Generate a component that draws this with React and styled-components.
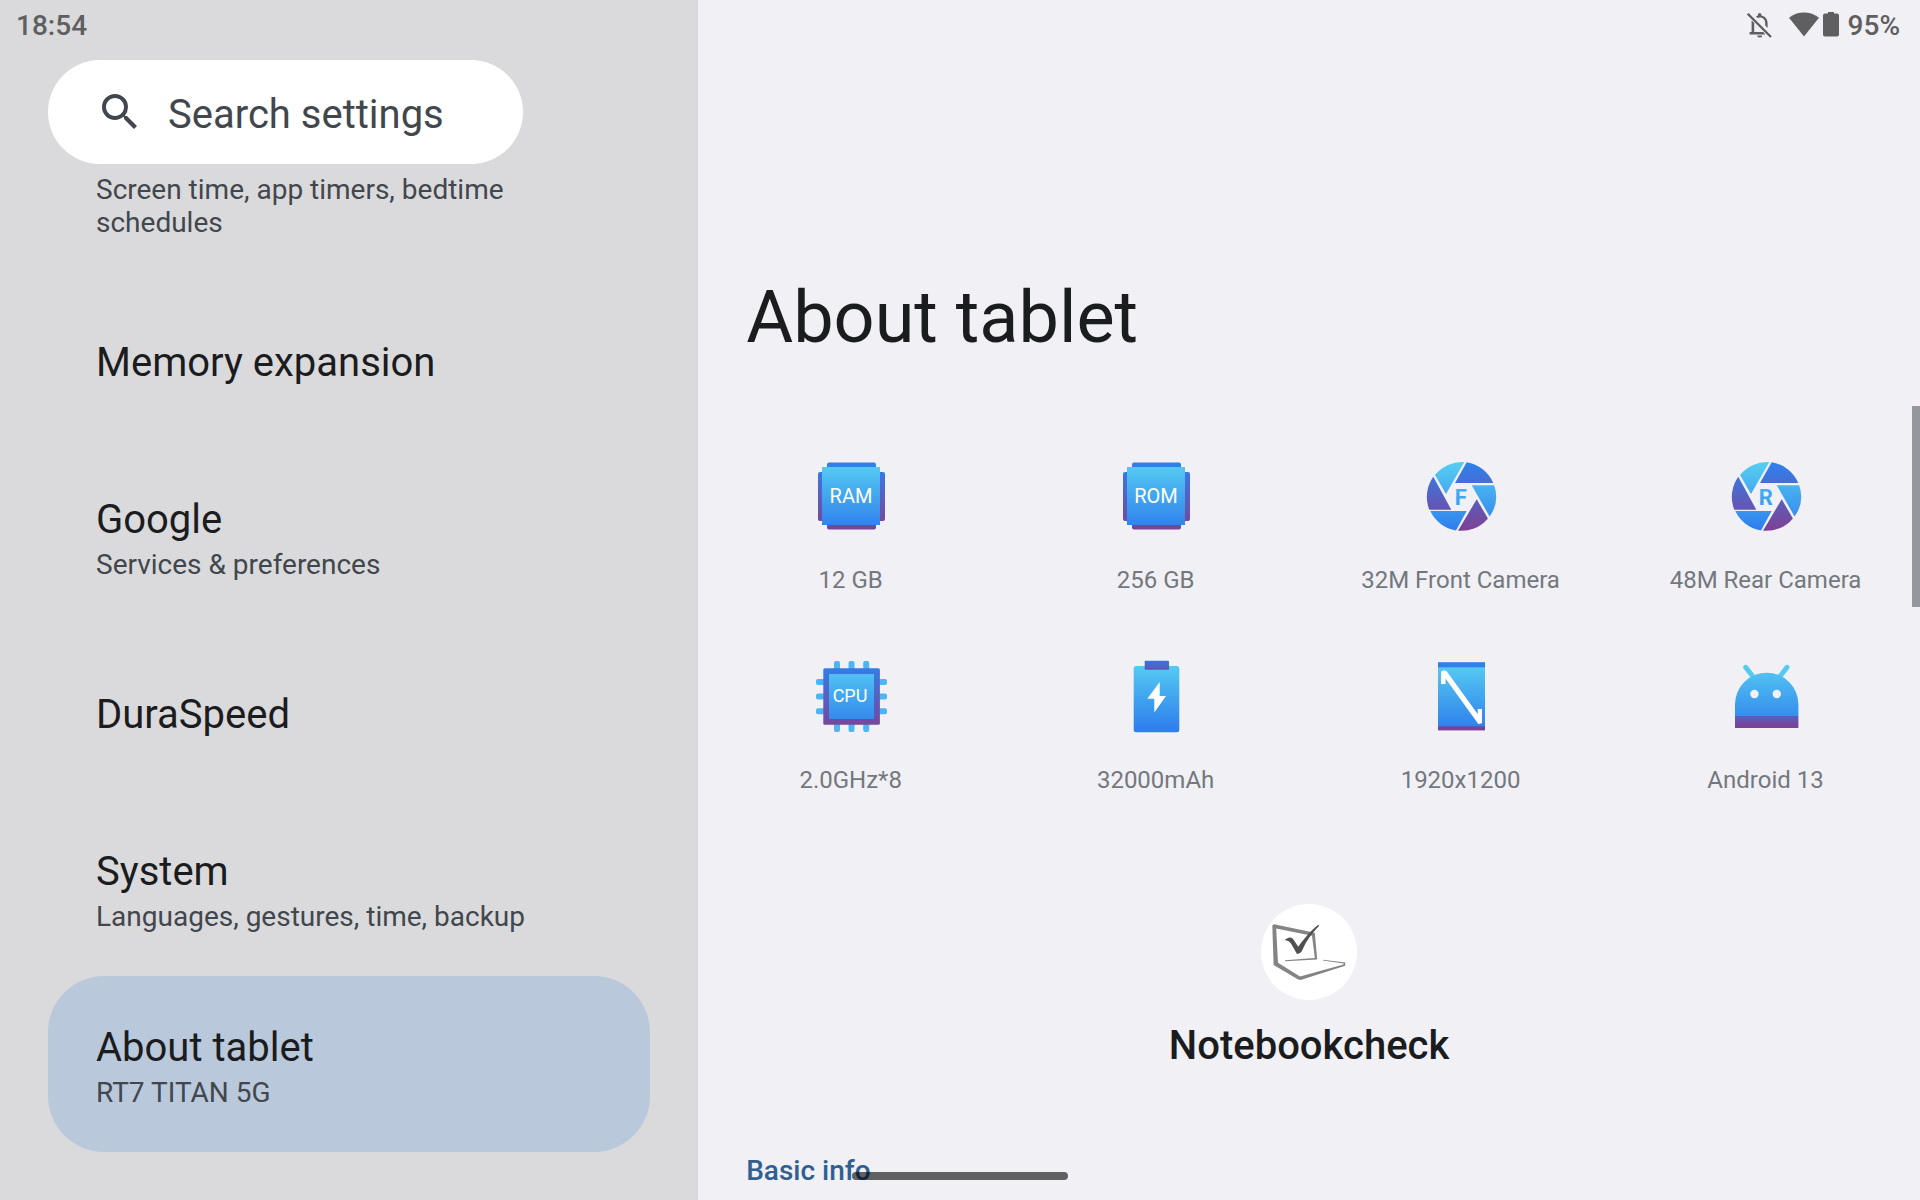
import React from "react";
import styled, { createGlobalStyle } from "styled-components";

const GlobalStyle = createGlobalStyle`
  *, *::before, *::after { box-sizing: border-box; }
  body {
    margin: 0;
    background: #f1f0f5;
    color: #1b1c1e;
    font-family: Roboto, "Noto Sans", sans-serif;
  }
`;

const Shell = styled.div`
  position: relative;
  display: grid;
  grid-template-columns: minmax(0, 4fr) minmax(0, 7fr);
  min-height: 100vh;
`;

const Sidebar = styled.aside`
  display: flex;
  flex-direction: column;
  background: #dadadc;
`;

const Panel = styled.main`
  display: flex;
  flex-direction: column;
`;

const StatusBar = styled.div`
  display: flex;
  align-items: center;
  justify-content: ${(p) => (p.$end ? "flex-end" : "flex-start")};
  height: 48px;
  padding: 4px 20px 0 16px;
  color: #5f5f61;
  font-size: 28px;
  font-weight: 500;
  line-height: 32px;
`;

const StatusIcon = styled.svg`
  display: block;
  width: ${(p) => p.$width}px;
  height: 28px;
  margin-right: ${(p) => p.$gap}px;
  fill: currentColor;
`;

const SearchPill = styled.label`
  display: flex;
  align-items: center;
  gap: 24px;
  width: 68%;
  height: 104px;
  margin: 12px 48px 0;
  padding: 0 48px;
  border-radius: 52px;
  background: #fff;
  color: #41474d;
`;

const SearchIcon = styled.svg`
  flex: none;
  width: 48px;
  height: 48px;
  fill: currentColor;
`;

const SearchInput = styled.input`
  flex: 1;
  min-width: 0;
  padding: 6px 0 0;
  border: 0;
  outline: 0;
  background: transparent;
  color: inherit;
  font: 400 40px/48px Roboto, "Noto Sans", sans-serif;
  &::placeholder { color: inherit; opacity: 1; }
`;

const NavList = styled.nav`
  display: flex;
  flex-direction: column;
  padding: 0 48px 48px;
`;

const NavItem = styled.a`
  display: flex;
  flex-direction: column;
  justify-content: ${(p) => (p.$scrolled ? "flex-start" : "center")};
  gap: 4px;
  min-height: ${(p) => (p.$scrolled ? 108 : 176)}px;
  padding: ${(p) => (p.$scrolled ? "9px 128px 0 48px" : "5px 48px 0")};
  border-radius: 56px;
  background: ${(p) => (p.$active ? "#b9c8db" : "transparent")};
  color: inherit;
  text-decoration: none;
`;

const NavTitle = styled.span`
  font-size: 40px;
  line-height: 48px;
`;

const NavSummary = styled.span`
  color: #41474d;
  font-size: 28px;
  line-height: 33px;
`;

const Title = styled.h1`
  margin: 0;
  padding: 226px 48px 0;
  font-size: 72px;
  font-weight: 400;
  line-height: 88px;
`;

const SpecGrid = styled.ul`
  display: grid;
  grid-template-columns: repeat(4, 1fr);
  row-gap: 64px;
  margin: 98px 0 0;
  padding: 0 2px 0 0;
  list-style: none;
`;

const Spec = styled.li`
  display: flex;
  flex-direction: column;
  align-items: center;
  gap: 32px;
  color: #73787e;
  font-size: 24px;
  line-height: 32px;
`;

const SpecIcon = styled.svg`
  display: block;
  width: 72px;
  height: 72px;
  overflow: visible;
  font-family: Roboto, sans-serif;
  text-anchor: middle;
`;

const Device = styled.section`
  display: flex;
  flex-direction: column;
  align-items: center;
  gap: 22px;
  margin-top: 108px;
`;

const DeviceLogo = styled.svg`
  display: block;
  width: 96px;
  height: 96px;
  border-radius: 50%;
  background: #fff;
`;

const DeviceName = styled.h2`
  margin: 0;
  font-size: 40px;
  font-weight: 500;
  line-height: 48px;
`;

const SectionLabel = styled.h3`
  margin: 84px 48px 0;
  padding-bottom: 12px;
  color: #2f6090;
  font-size: 28px;
  font-weight: 500;
  line-height: 33px;
`;

const ScrollThumb = styled.div`
  position: absolute;
  top: 406px;
  right: 0;
  width: 8px;
  height: 201px;
  background: #94979b;
`;

const GestureBar = styled.div`
  position: absolute;
  bottom: 20px;
  left: 50%;
  width: 216px;
  height: 8px;
  border-radius: 4px;
  background: rgba(0, 0, 0, 0.6);
  transform: translateX(-50%);
`;

const LIGHT = "url(#light)";
const DEEP = "url(#deep)";

const GradientDefs = styled.svg`
  position: absolute;
  width: 0;
  height: 0;
`;

function Gradients() {
  return (
    <GradientDefs aria-hidden="true">
      <defs>
        <linearGradient id="light" gradientUnits="userSpaceOnUse" x1="0" y1="4" x2="0" y2="68">
          <stop offset="0" stopColor="#56ccf2" />
          <stop offset="1" stopColor="#2f80ed" />
        </linearGradient>
        <linearGradient id="deep" gradientUnits="userSpaceOnUse" x1="0" y1="4" x2="0" y2="68">
          <stop offset="0" stopColor="#2f80ed" />
          <stop offset="1" stopColor="#7b4397" />
        </linearGradient>
        <linearGradient id="cap" x1="0" y1="0" x2="0" y2="1">
          <stop offset="0" stopColor="#3a72dc" />
          <stop offset="1" stopColor="#5f58b8" />
        </linearGradient>
        <linearGradient id="base" x1="0" y1="0" x2="0" y2="1">
          <stop offset="0" stopColor="#5660c0" />
          <stop offset="0.8" stopColor="#7b4397" />
        </linearGradient>
      </defs>
    </GradientDefs>
  );
}

function MemoryChip({ text }) {
  return (
    <SpecIcon viewBox="0 0 72 72">
      <rect x="12" y="2.5" width="49" height="67" rx="2" fill={DEEP} />
      <rect x="3" y="12" width="67" height="49" rx="2" fill={DEEP} />
      <rect x="7" y="7" width="58" height="58" fill={LIGHT} />
      <text x="36" y="43.3" fill="#fff" fontSize="20">{text}</text>
    </SpecIcon>
  );
}

function Shutter({ letter }) {
  return (
    <SpecIcon viewBox="0 0 72 72">
      <g fill={LIGHT}>
        <path d="M21 34 10 15A34.5 34.5 0 0 1 39.3 2.1Z" />
        <path d="M46.7 25.3H69.2A34.5 34.5 0 0 1 64.6 56.5Z" />
        <path d="M5.3 51H41.7L31 70.4A34.5 34.5 0 0 1 5.3 51Z" />
        <text x="35.7" y="44.6" fontSize="22" fontWeight="700">{letter}</text>
      </g>
      <g fill={DEEP}>
        <path d="M41.7 2.3 30 23H68.3A34.5 34.5 0 0 0 41.7 2.3Z" />
        <path d="M51.7 39.3 62.9 58.4A34.5 34.5 0 0 1 33 70.7Z" />
        <path d="M8.3 16.7 26.3 49.7H4.3A34.5 34.5 0 0 1 8.3 16.7Z" />
      </g>
    </SpecIcon>
  );
}

function Processor() {
  const pins = [19, 33.5, 48.2];
  return (
    <SpecIcon viewBox="0 0 72 72">
      <g fill="#4bb6f2">
        {pins.map((p) => (
          <React.Fragment key={p}>
            <rect x={p} y="1" width="6" height="71" rx="2" />
            <rect x="1" y={p} width="71" height="6" rx="2" />
          </React.Fragment>
        ))}
      </g>
      <rect x="8.3" y="8.3" width="56.6" height="56.4" rx="1.5" fill={DEEP} />
      <rect x="14" y="14" width="45" height="45" fill={LIGHT} />
      <text x="35" y="42.3" fill="#fff" fontSize="18">CPU</text>
    </SpecIcon>
  );
}

function BatteryPack() {
  return (
    <SpecIcon viewBox="0 0 72 72">
      <rect x="13.7" y="6" width="45.6" height="66.2" rx="2.5" fill={LIGHT} />
      <rect x="24.7" y="0.7" width="24.3" height="9" rx="0.8" fill="url(#cap)" />
      <path d="M39.7 22V35.9H46L34.3 52.4V38.8H27.3Z" fill="#fff" />
    </SpecIcon>
  );
}

function Screen() {
  return (
    <SpecIcon viewBox="0 0 72 72">
      <rect x="13" y="2.2" width="47" height="68.2" fill={DEEP} />
      <rect x="13" y="7.3" width="47" height="59" fill={LIGHT} />
      <path d="M16 24V11.7L18.7 10.3 21.5 11 52.7 54V49H57V63.3L53.3 64 20.5 18.5V24Z" fill="#fff" />
    </SpecIcon>
  );
}

function Robot() {
  return (
    <SpecIcon viewBox="0 0 72 72">
      <path d="M15.7 7.3 24 18M57 7.3 48.8 18" stroke="#56caf2" strokeWidth="5" strokeLinecap="round" />
      <path d="M5 56V44.4A31.7 31.7 0 0 1 68.4 44.4V56Z" fill={LIGHT} />
      <rect x="5" y="56" width="63.4" height="12" fill="url(#base)" />
      <circle cx="24.4" cy="34" r="4.2" fill="#f1f0f5" />
      <circle cx="46.8" cy="34" r="4.2" fill="#f1f0f5" />
    </SpecIcon>
  );
}

function LaptopLogo() {
  return (
    <DeviceLogo viewBox="0 0 96 96" role="img" aria-label="Notebookcheck">
      <path d="M11.3 21.5 13 20.3 53.8 28.7 56.2 55.6 24 57.2V56.3L53.8 54 51 31.8 15.2 24.4 17 58.7 39 72.6 82.6 60.6V59.6L62 56.5 62.2 55.7 84.2 58.6V61.7L39.6 76 37.2 75.4 12.6 61Z" fill="#848484" />
      <path d="M23.6 36.2C27 32.8 31 32.7 32.4 35.6L37.3 42.8C43 34.5 51.5 25 57.4 20.8L58.2 21.8C51.5 28.5 45.5 36.5 41.6 45.4Q40.4 49 36 50L29.8 39.2Q27.5 35.8 23.6 36.2Z" fill="#505050" />
    </DeviceLogo>
  );
}

const navItems = [
  { summary: "Screen time, app timers, bedtime schedules", scrolled: true },
  { title: "Memory expansion" },
  { title: "Google", summary: "Services & preferences" },
  { title: "DuraSpeed" },
  { title: "System", summary: "Languages, gestures, time, backup" },
  { title: "About tablet", summary: "RT7 TITAN 5G", active: true },
];

const specs = [
  { icon: <MemoryChip text="RAM" />, label: "12 GB" },
  { icon: <MemoryChip text="ROM" />, label: "256 GB" },
  { icon: <Shutter letter="F" />, label: "32M Front Camera" },
  { icon: <Shutter letter="R" />, label: "48M Rear Camera" },
  { icon: <Processor />, label: "2.0GHz*8" },
  { icon: <BatteryPack />, label: "32000mAh" },
  { icon: <Screen />, label: "1920x1200" },
  { icon: <Robot />, label: "Android 13" },
];

export default function App() {
  return (
    <Shell>
      <GlobalStyle />
      <Gradients />
      <Sidebar>
        <StatusBar>18:54</StatusBar>
        <SearchPill>
          <SearchIcon viewBox="0 0 24 24" aria-hidden="true">
            <path d="M15.5 14h-.79l-.28-.27A6.47 6.47 0 0 0 16 9.5 6.5 6.5 0 1 0 9.5 16c1.61 0 3.09-.59 4.23-1.57l.27.28v.79l5 4.99L20.49 19zm-6 0C7.01 14 5 11.99 5 9.5S7.01 5 9.5 5 14 7.01 14 9.5 11.99 14 9.5 14" />
          </SearchIcon>
          <SearchInput type="text" placeholder="Search settings" aria-label="Search settings" />
        </SearchPill>
        <NavList>
          {navItems.map((item) => (
            <NavItem
              key={item.title || item.summary}
              href="#"
              $active={item.active}
              $scrolled={item.scrolled}
            >
              {item.title && <NavTitle>{item.title}</NavTitle>}
              {item.summary && <NavSummary>{item.summary}</NavSummary>}
            </NavItem>
          ))}
        </NavList>
      </Sidebar>
      <Panel>
        <StatusBar $end>
          <StatusIcon viewBox="0 2 28 28" $width={28} $gap={15} aria-hidden="true">
            <path d="M3.6 3 26.8 26.2 25.2 27.8 1.8 4.6Z" />
            <path d="M6.6 10.4 9.2 13V22H18.2L20.4 24.4H4.6V22H6.6ZM11 6.4Q12.2 5.6 13 5.4V4.6A1.7 1.7 0 0 1 16.4 4.6V5.4C20.4 6.3 22.6 9.4 22.6 13V18L20.2 15.6V13C20.2 9.6 17.6 7.6 14.8 7.6Q13.6 7.6 12.6 8.1Z" />
            <path d="M12.2 25.4H17.2A2.5 2.2 0 0 1 12.2 25.4Z" />
          </StatusIcon>
          <StatusIcon viewBox="0 1 32 28" $width={32} $gap={3} aria-hidden="true">
            <path d="M16 25.4 1 6.8C9.5 -.2 22.5 -.2 31 6.8Z" />
          </StatusIcon>
          <StatusIcon viewBox="0 2 16 28" $width={16} $gap={9} aria-hidden="true">
            <path d="M5 2H11V3.6H14A2 2 0 0 1 16 5.6V24.6A2 2 0 0 1 14 26.6H2A2 2 0 0 1 0 24.6V5.6A2 2 0 0 1 2 3.6H5Z" />
          </StatusIcon>
          95%
        </StatusBar>
        <Title>About tablet</Title>
        <SpecGrid>
          {specs.map((spec) => (
            <Spec key={spec.label}>
              {spec.icon}
              {spec.label}
            </Spec>
          ))}
        </SpecGrid>
        <Device>
          <LaptopLogo />
          <DeviceName>Notebookcheck</DeviceName>
        </Device>
        <SectionLabel>Basic info</SectionLabel>
      </Panel>
      <ScrollThumb />
      <GestureBar />
    </Shell>
  );
}
